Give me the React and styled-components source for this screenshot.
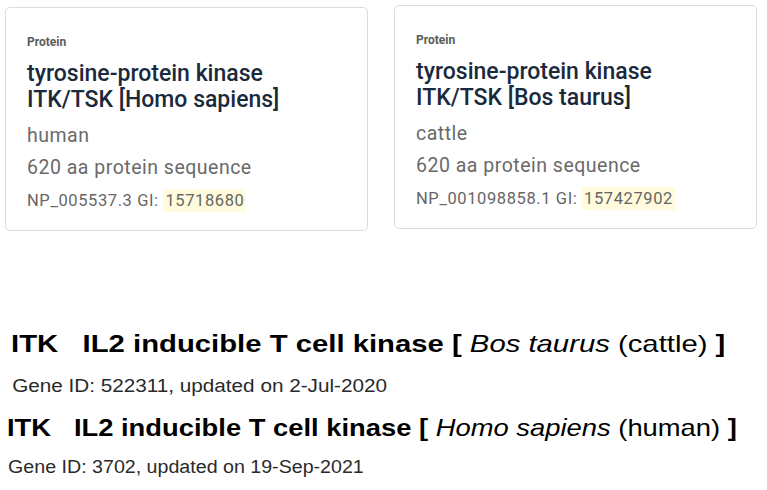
import React from "react";
import styled, { createGlobalStyle } from "styled-components";

const GlobalStyle = createGlobalStyle`
  html, body {
    margin: 0;
    padding: 0;
    background: #ffffff;
  }
`;

const Page = styled.div`
  width: 767px;
  height: 490px;
  overflow: hidden;
  display: flex;
  flex-direction: column;
`;

const CardRow = styled.div`
  display: flex;
  align-items: flex-start;
  gap: 26px;
  padding-left: 5px;
`;

const Card = styled.div`
  box-sizing: border-box;
  width: 363px;
  height: 224px;
  margin-top: ${p => p.$top}px;
  border: 1px solid #dcdcdc;
  border-radius: 5px;
  padding: 26px 12px 0 21px;
  font-family: Roboto, "Noto Sans", sans-serif;
`;

const Kind = styled.div`
  font-size: 12px;
  font-weight: 700;
  color: #5c5c5c;
  line-height: 16px;
`;

const Title = styled.div`
  margin-top: 11px;
  font-size: 23px;
  font-weight: 500;
  line-height: 26px;
  color: #1a2a3c;
`;

const Line = styled.div`
  margin-top: 10px;
  font-size: 19.5px;
  line-height: 26px;
  letter-spacing: 0.5px;
  color: #6a6a6a;
  & + & {
    margin-top: 6px;
  }
`;

const Ids = styled.div`
  margin-top: 8px;
  font-size: 16.5px;
  line-height: 24px;
  letter-spacing: 0.6px;
  color: #666;
`;

const Mark = styled.span`
  background: #fffbdc;
  padding: 2px 2px;
`;

const GeneList = styled.div`
  margin-top: 99px;
  font-family: "Liberation Sans", Arial, sans-serif;
  color: #000;
`;

const GeneBlock = styled.div`
  padding-left: ${p => p.$indent}px;
  margin-top: ${p => p.$gap}px;
`;

const GeneName = styled.div`
  font-size: 24px;
  font-weight: 700;
  line-height: 28px;
  white-space: nowrap;
  transform: scaleX(${p => p.$stretch});
  transform-origin: left center;
  i,
  span.common {
    font-weight: 400;
  }
`;

const Symbol = styled.span`
  margin-right: 20px;
`;

const GeneMeta = styled.div`
  margin-top: ${p => p.$gap}px;
  padding-left: 1px;
  font-size: 18px;
  line-height: 20px;
  color: #2a2a2a;
  white-space: nowrap;
  transform: scaleX(${p => p.$stretch});
  transform-origin: left center;
`;

const proteins = [
  {
    top: 7,
    organism: "ITK/TSK [Homo sapiens]",
    common: "human",
    acc: "NP_005537.3",
    gi: "15718680"
  },
  {
    top: 5,
    organism: "ITK/TSK [Bos taurus]",
    common: "cattle",
    acc: "NP_001098858.1",
    gi: "157427902"
  }
];

const genes = [
  {
    indent: 11,
    gap: 0,
    metaGap: 18,
    nameStretch: 1.22,
    metaStretch: 1.15,
    species: "Bos taurus",
    common: "cattle",
    id: "522311",
    date: "2-Jul-2020"
  },
  {
    indent: 7,
    gap: 18,
    metaGap: 15,
    nameStretch: 1.14,
    metaStretch: 1.09,
    species: "Homo sapiens",
    common: "human",
    id: "3702",
    date: "19-Sep-2021"
  }
];

const App = () => {
  return (
    <Page>
      <GlobalStyle />
      <CardRow>
        {proteins.map(p => (
          <Card key={p.acc} $top={p.top}>
            <Kind>Protein</Kind>
            <Title>
              tyrosine-protein kinase
              <br />
              {p.organism}
            </Title>
            <Line>{p.common}</Line>
            <Line>620 aa protein sequence</Line>
            <Ids>
              {p.acc} GI: <Mark>{p.gi}</Mark>
            </Ids>
          </Card>
        ))}
      </CardRow>
      <GeneList>
        {genes.map(g => (
          <GeneBlock key={g.id} $indent={g.indent} $gap={g.gap}>
            <GeneName $stretch={g.nameStretch}>
              <Symbol>ITK</Symbol>IL2 inducible T cell kinase [ <i>{g.species}</i>{" "}
              <span className="common">({g.common})</span> ]
            </GeneName>
            <GeneMeta $gap={g.metaGap} $stretch={g.metaStretch}>
              Gene ID: {g.id}, updated on {g.date}
            </GeneMeta>
          </GeneBlock>
        ))}
      </GeneList>
    </Page>
  );
};

export default App;
